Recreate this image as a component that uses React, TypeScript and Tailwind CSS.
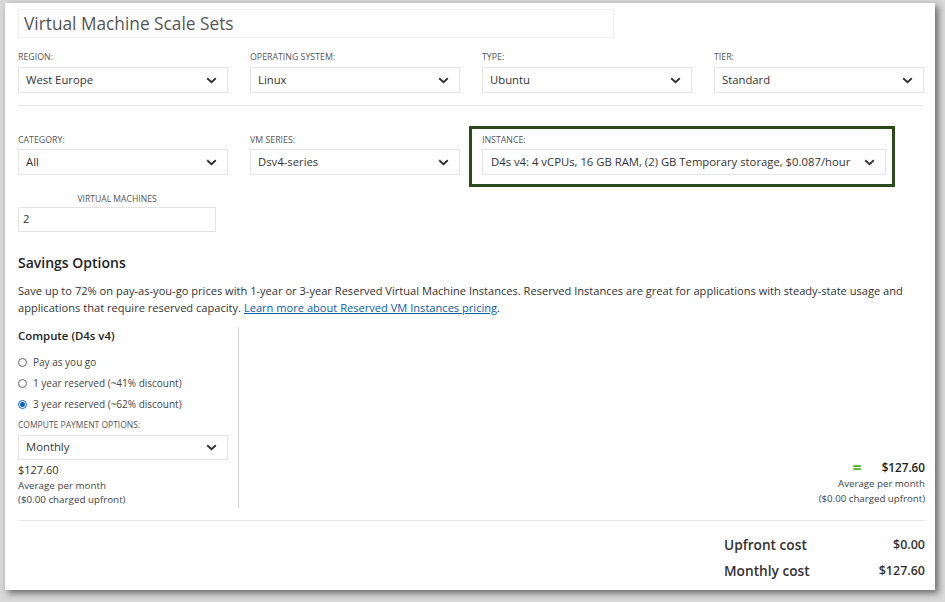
import React from "react";

const Chevron = () => (
  <svg width="11" height="7" viewBox="0 0 11 7" className="shrink-0">
    <polyline points="1.2,1.2 5.5,5.3 9.8,1.2" fill="none" stroke="#333" strokeWidth="1.9" />
  </svg>
);

const Select = ({ value, w = "w-[210px]", h = "h-[26px]", pl = "pl-[7px]" }: { value: string; w?: string; h?: string; pl?: string }) => (
  <div className={`${w} ${h} ${pl} border border-[#e3e3e3] bg-white flex items-center justify-between pr-[10px] text-[11.3px] text-[#333] whitespace-nowrap`}>
    <span>{value}</span>
    <Chevron />
  </div>
);

const Label = ({ children, mb = "mb-[5px]" }: { children: React.ReactNode; mb?: string }) => (
  <div className={`text-[8.8px] leading-[11px] text-[#555] uppercase ${mb}`}>{children}</div>
);

const Radio = ({ checked, label }: { checked?: boolean; label: string }) => (
  <div className="flex items-center h-[21px] text-[10px] text-[#444]">
    {checked ? (
      <span className="w-[9px] h-[9px] rounded-full border border-[#0a64c8] flex items-center justify-center mr-[6px]">
        <span className="w-[5px] h-[5px] rounded-full bg-[#0a64c8]" />
      </span>
    ) : (
      <span className="w-[9px] h-[9px] rounded-full border border-[#666] mr-[6px]" />
    )}
    {label}
  </div>
);

export default function App() {
  return (
    <div
      className="w-[945px] h-[602px] bg-[#d9d9d9] overflow-hidden pt-[3px] pl-[5px]"
      style={{ fontFamily: '"Open Sans", "Noto Sans", sans-serif' }}
    >
      <div className="w-[930px] h-[587px] bg-white shadow-[3px_3px_7px_rgba(0,0,0,0.55)] pt-[6px] px-[13px] relative">
        <div className="w-[596px] h-[29px] border border-[#eeeeee] pl-[5px] flex items-center text-[17.3px] text-[#555]">
          Virtual Machine Scale Sets
        </div>

        <div className="grid grid-cols-[210px_210px_210px_210px] gap-x-[22px] mt-[14px]">
          <div>
            <Label mb="mb-[4px]">Region:</Label>
            <Select value="West Europe" />
          </div>
          <div>
            <Label mb="mb-[4px]">Operating system:</Label>
            <Select value="Linux" />
          </div>
          <div>
            <Label mb="mb-[4px]">Type:</Label>
            <Select value="Ubuntu" />
          </div>
          <div>
            <Label mb="mb-[4px]">Tier:</Label>
            <Select value="Standard" />
          </div>
        </div>

        <div className="h-px bg-[#e6e6e6] mt-[12px] w-[907px]" />

        <div className="grid grid-cols-[210px_210px_404px] gap-x-[22px] mt-[29px]">
          <div>
            <Label mb="mb-[3px]">Category:</Label>
            <Select value="All" />
          </div>
          <div>
            <Label mb="mb-[3px]">VM series:</Label>
            <Select value="Dsv4-series" />
          </div>
          <div className="relative">
            <div className="absolute left-[-13px] top-[-9px] w-[426px] h-[61px] border-[3px] border-[#2c4a1c]" />
            <Label mb="mb-[3px]">Instance:</Label>
            <Select value="D4s v4: 4 vCPUs, 16 GB RAM, (2) GB Temporary storage, $0.087/hour" w="w-[404px]" pl="pl-[8px]" />
          </div>
        </div>

        <div className="mt-[19px] w-[198px]">
          <div className="text-[8.6px] leading-[11px] text-[#555] text-center mb-[2px]">VIRTUAL MACHINES</div>
          <div className="h-[25px] border border-[#e3e3e3] flex items-center pl-[4px] text-[11.3px] text-[#333]">2</div>
        </div>

        <div className="mt-[21px] text-[14px] leading-[20px] font-semibold text-[#222]">Savings Options</div>
        <div className="mt-[9px] w-[907px] text-[11.1px] leading-[17px] text-[#333]">
          Save up to 72% on pay-as-you-go prices with 1-year or 3-year Reserved Virtual Machine Instances. Reserved Instances are great for applications with steady-state usage and applications that require reserved capacity.{" "}
          <span className="text-[#0b5cab] underline">Learn more about Reserved VM Instances pricing</span>.
        </div>

        <div className="flex mt-[11px] w-[907px]">
          <div className="w-[221px] border-r border-[#cfcfcf] h-[181px]">
            <div className="text-[11.4px] leading-[17px] font-semibold text-[#222]">Compute (D4s v4)</div>
            <div className="mt-[8px]">
              <Radio label="Pay as you go" />
              <Radio label="1 year reserved (~41% discount)" />
              <Radio checked label="3 year reserved (~62% discount)" />
            </div>
            <div className="text-[8.5px] leading-[11px] text-[#555] mt-[4px]">COMPUTE PAYMENT OPTIONS:</div>
            <div className="mt-[5px]">
              <Select value="Monthly" h="h-[25px]" />
            </div>
            <div className="text-[11px] leading-[16px] text-[#333] mt-[2px]">$127.60</div>
            <div className="text-[9.8px] leading-[14px] text-[#444] mt-[1px]">Average per month</div>
            <div className="text-[9.8px] leading-[14px] text-[#444]">($0.00 charged upfront)</div>
          </div>
          <div className="flex-1 flex flex-col items-end justify-end pb-[2px]">
            <div className="flex items-center">
              <span className="text-[#5bb318] text-[16px] font-bold leading-[16px] mr-[20px]">=</span>
              <span className="text-[11.7px] font-semibold text-[#222] leading-[16px]">$127.60</span>
            </div>
            <div className="text-[9.7px] leading-[15px] text-[#444] mt-[1px]">Average per month</div>
            <div className="text-[9.7px] leading-[15px] text-[#444]">($0.00 charged upfront)</div>
          </div>
        </div>

        <div className="h-px bg-[#e6e6e6] mt-[12px] w-[907px]" />

        <div className="w-[907px] flex justify-end mt-[11px]">
          <div className="w-[201px] text-[13.7px] font-semibold text-[#333]">
            <div className="flex justify-between leading-[26px]">
              <span>Upfront cost</span>
              <span className="text-[12.5px]">$0.00</span>
            </div>
            <div className="flex justify-between leading-[26px]">
              <span>Monthly cost</span>
              <span className="text-[12.5px]">$127.60</span>
            </div>
          </div>
        </div>
      </div>
    </div>
  );
}
